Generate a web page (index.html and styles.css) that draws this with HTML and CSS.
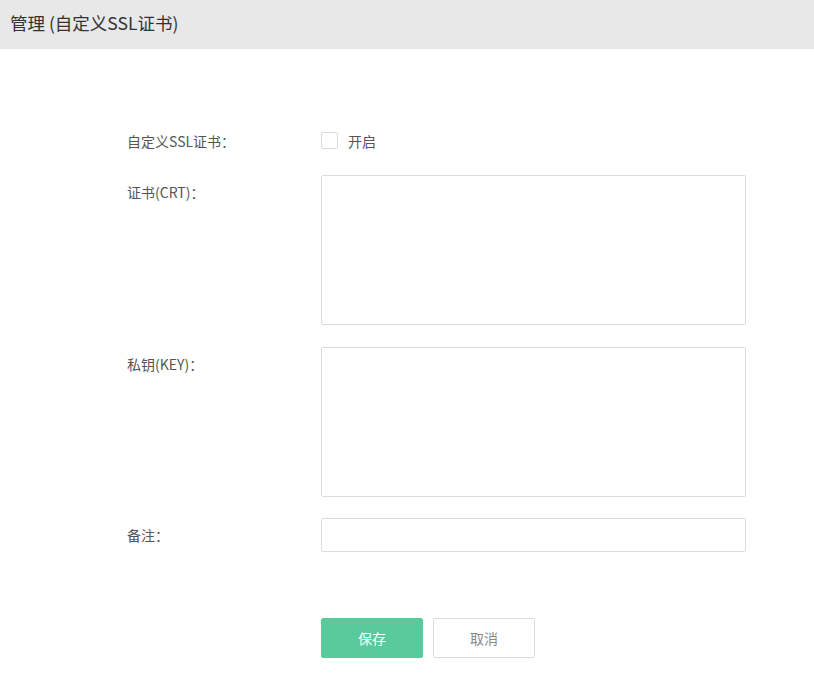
FILE: index.html
```html
<!DOCTYPE html>
<html lang="zh">
<head>
<meta charset="utf-8">
<link rel="stylesheet" href="styles.css">
</head>
<body>
<div class="header">管理 (自定义SSL证书)</div>
<div class="form">
  <div class="row row-check">
    <div class="label">自定义SSL证书：</div>
    <label class="check"><span class="box"></span><span>开启</span></label>
  </div>
  <div class="row">
    <div class="label label-top">证书(CRT)：</div>
    <textarea class="area area-first"></textarea>
  </div>
  <div class="row">
    <div class="label label-top">私钥(KEY)：</div>
    <textarea class="area"></textarea>
  </div>
  <div class="row row-input">
    <div class="label">备注：</div>
    <input class="input" type="text">
  </div>
  <div class="actions">
    <button class="btn btn-save">保存</button>
    <button class="btn btn-cancel">取消</button>
  </div>
</div>
</body>
</html>
```
FILE: styles.css
```css
* { box-sizing: border-box; }
html, body { margin: 0; padding: 0; background: #fff; }
body {
  font-family: "Noto Sans CJK SC", "Microsoft YaHei", "Liberation Sans", sans-serif;
  color: #555;
  font-size: 14px;
}
.header {
  height: 49px;
  background: #e8e8e8;
  padding-left: 10px;
  line-height: 46px;
  font-size: 17.5px;
  color: #333;
}
.form {
  padding-left: 127px;
  padding-top: 82px;
}
.row {
  display: flex;
  align-items: flex-start;
}
.label {
  width: 194px;
  flex: none;
  font-size: 14px;
  color: #555;
}
.row-check {
  height: 19px;
  align-items: center;
  margin-bottom: 25px;
}
.check {
  display: flex;
  align-items: center;
  gap: 10px;
  font-size: 14px;
  color: #555;
}
.box {
  width: 17px;
  height: 17px;
  border: 1px solid #dcdcdc;
  border-radius: 2px;
  background: #fff;
}
.label-top { padding-top: 7px; }
.area {
  width: 425px;
  height: 150px;
  border: 1px solid #dcdcdc;
  border-radius: 2px;
  resize: none;
  margin: 0 0 21px 0;
  padding: 0;
  outline: none;
}
.area-first { margin-bottom: 22px; }
.row-input { align-items: center; }
.input {
  width: 425px;
  height: 34px;
  border: 1px solid #dcdcdc;
  border-radius: 2px;
  margin: 0;
  outline: none;
}
.actions {
  display: flex;
  gap: 10px;
  padding-left: 194px;
  margin-top: 66px;
}
.btn {
  width: 102px;
  height: 40px;
  border-radius: 2px;
  font-family: inherit;
  font-size: 14px;
  cursor: pointer;
}
.btn-save {
  background: #58ca9c;
  border: 1px solid #58ca9c;
  color: #fff;
}
.btn-cancel {
  background: #fff;
  border: 1px solid #dcdcdc;
  color: #888;
}
```
